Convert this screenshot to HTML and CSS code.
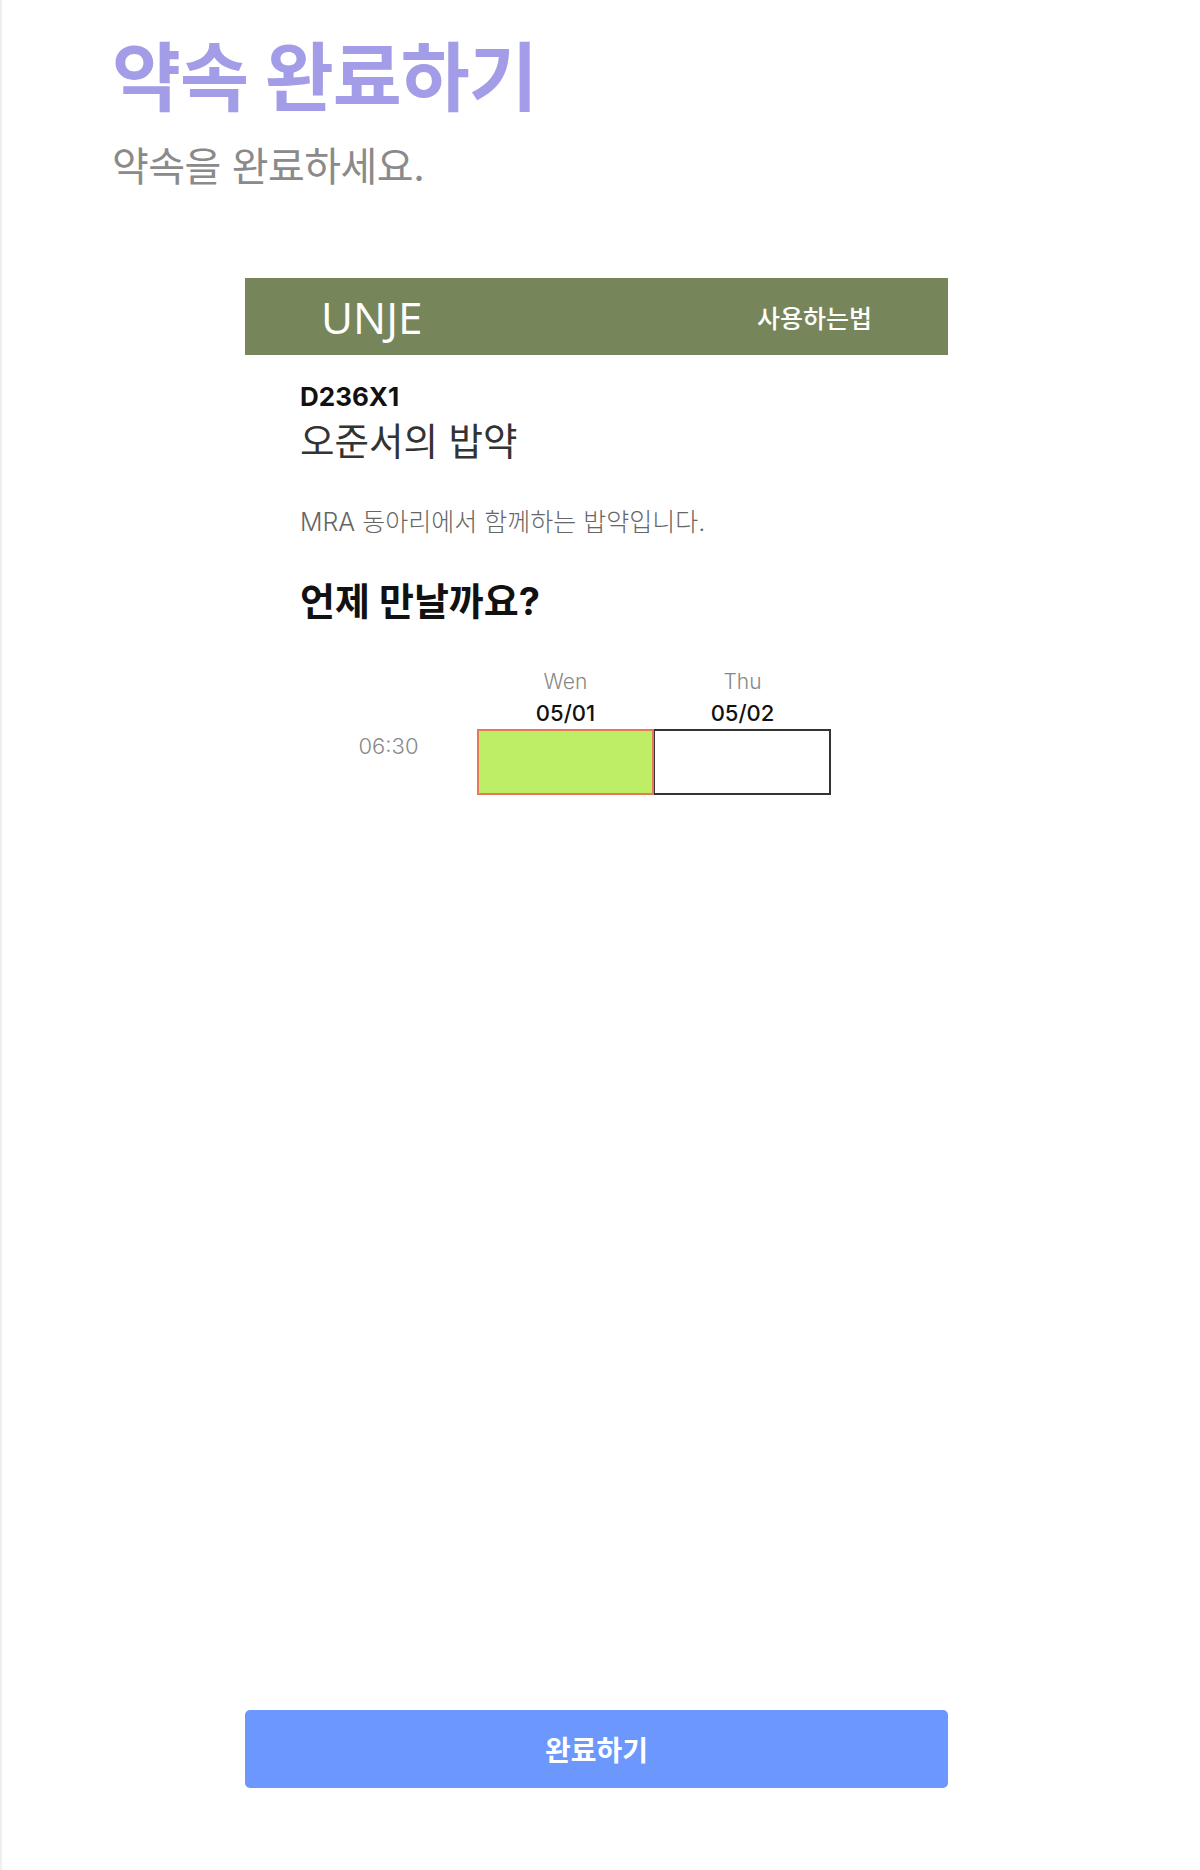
FILE: index.html
```html
<!DOCTYPE html>
<html lang="ko">
<head>
<meta charset="utf-8">
<title>약속 완료하기</title>
<link rel="stylesheet" href="styles.css">
</head>
<body>
<div class="page">
  <header class="page-head">
    <h1 class="page-title">약속 완료하기</h1>
    <p class="page-sub">약속을 완료하세요.</p>
  </header>

  <main class="panel">
    <div class="brand-bar">
      <span class="brand">UNJE</span>
      <span class="howto">사용하는법</span>
    </div>

    <section class="info">
      <div class="code">D236X1</div>
      <div class="event-name">오준서의 밥약</div>
      <p class="event-desc">MRA 동아리에서 함께하는 밥약입니다.</p>
      <h2 class="question">언제 만날까요?</h2>

      <div class="schedule">
        <div class="corner"></div>
        <div class="day-head"><span class="dow">Wen</span><span class="date">05/01</span></div>
        <div class="day-head"><span class="dow">Thu</span><span class="date">05/02</span></div>
        <div class="time">06:30</div>
        <div class="cell cell-on"></div>
        <div class="cell cell-off"></div>
      </div>
    </section>

    <div class="spacer"></div>

    <button class="done-btn" type="button">완료하기</button>
  </main>
</div>
</body>
</html>
```

FILE: styles.css
```css
* { box-sizing: border-box; }

html, body {
  margin: 0;
  padding: 0;
  background: #ffffff;
}

body {
  font-family: "Inter", "Noto Sans CJK KR", sans-serif;
  color: #111;
}

.page {
  min-height: 1870px;
  border-left: 2px solid #efefef;
  display: flex;
  flex-direction: column;
}

.page-head {
  padding: 28px 0 0 110px;
}

.page-title {
  margin: 0;
  font-size: 75px;
  line-height: 100px;
  font-weight: 700;
  color: #a39ce6;
  letter-spacing: -1px;
}

.page-sub {
  margin: 10px 0 0;
  font-size: 40px;
  line-height: 58px;
  font-weight: 400;
  color: #8a8a8a;
  letter-spacing: -0.5px;
}

.panel {
  width: 703px;
  margin: 82px 0 0 243px;
  display: flex;
  flex-direction: column;
  flex: 1;
}

.brand-bar {
  height: 77px;
  background: #76865a;
  display: flex;
  align-items: center;
  justify-content: space-between;
  padding: 0 76px 0 76px;
  color: #fff;
}

.brand {
  font-family: "Open Sans", "Noto Sans", sans-serif;
  font-size: 44px;
  font-weight: 400;
  letter-spacing: 0;
}

.howto {
  font-size: 25px;
  font-weight: 500;
}

.info {
  padding: 24px 0 0 55px;
}

.code {
  font-size: 26px;
  font-weight: 700;
  line-height: 36px;
  color: #111;
}

.event-name {
  margin-top: 2px;
  font-size: 37.5px;
  font-weight: 400;
  line-height: 50px;
  color: #333;
}

.event-desc {
  margin: 37px 0 0;
  font-size: 25px;
  font-weight: 300;
  line-height: 36px;
  color: #666;
}

.question {
  margin: 36px 0 0;
  font-size: 38px;
  font-weight: 700;
  line-height: 50px;
  color: #111;
}

.schedule {
  margin-top: 40px;
  display: grid;
  grid-template-columns: 177px 177px 177px;
  grid-template-rows: auto 66px;
}

.day-head {
  display: flex;
  flex-direction: column;
  align-items: center;
  padding-bottom: 1px;
}

.dow {
  font-size: 21px;
  font-weight: 300;
  color: #888;
  line-height: 32px;
}

.date {
  font-size: 22px;
  font-weight: 500;
  color: #111;
  line-height: 30px;
}

.time {
  text-align: center;
  font-size: 22px;
  font-weight: 300;
  color: #888;
  padding-top: 2px;
  line-height: 30px;
}

.cell {
  height: 66px;
}

.cell-on {
  background: #bdee66;
  border: 2px solid #e5775a;
}

.cell-off {
  background: #fff;
  border: 2px solid #333;
  border-left-width: 1px;
}

.spacer {
  flex: 1;
}

.done-btn {
  height: 78px;
  margin-bottom: 82px;
  border: none;
  border-radius: 5px;
  background: #6c98fd;
  color: #fff;
  font-family: "Noto Sans CJK KR", sans-serif;
  font-size: 28px;
  font-weight: 700;
  cursor: pointer;
}
```
